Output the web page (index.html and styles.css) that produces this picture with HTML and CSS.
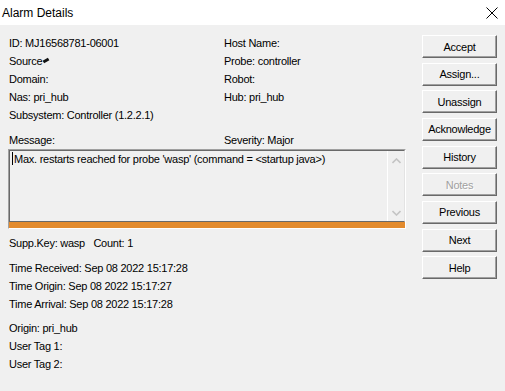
FILE: index.html
```html
<!DOCTYPE html>
<html lang="en">
<head>
	<meta charset="UTF-8">
	<title>Alarm Details</title>
	<link rel="stylesheet" href="styles.css">
</head>
<body>
	<div class="titlebar">
		<span class="title">Alarm Details</span>
		<svg class="close" width="12" height="12" viewBox="0 0 12 12">
			<path d="M0.5 0.5 L11.5 11.5 M11.5 0.5 L0.5 11.5" stroke="#000" stroke-width="1" fill="none"/>
		</svg>
	</div>

	<div class="dialog">
		<div class="details">
			<div class="info">
				<div>ID: MJ16568781-06001</div>
				<div>Host Name:</div>
				<div>Source<span class="smudge"></span></div>
				<div>Probe: controller</div>
				<div>Domain:</div>
				<div>Robot:</div>
				<div>Nas: pri_hub</div>
				<div>Hub: pri_hub</div>
				<div>Subsystem: Controller (1.2.2.1)</div>
				<div></div>
				<div class="gap-top">Message:</div>
				<div class="gap-top">Severity: Major</div>
			</div>

			<div class="msgbox">
				<div class="msgedit">
					<div class="msgtext"><span class="caret"></span>Max. restarts reached for probe 'wasp' (command = &lt;startup java&gt;)</div>
					<div class="scroll">
						<svg width="9" height="6" viewBox="0 0 9 6"><path d="M0.5 5 L4.5 1 L8.5 5" stroke="#c4c4c4" stroke-width="1.6" fill="none"/></svg>
						<svg width="9" height="6" viewBox="0 0 9 6"><path d="M0.5 1 L4.5 5 L8.5 1" stroke="#c4c4c4" stroke-width="1.6" fill="none"/></svg>
					</div>
				</div>
				<div class="severity-bar"></div>
			</div>

			<div class="line supp">Supp.Key: wasp&nbsp;&nbsp;&nbsp;Count: 1</div>

			<div class="group times">
				<div class="line">Time Received: Sep 08 2022 15:17:28</div>
				<div class="line">Time Origin: Sep 08 2022 15:17:27</div>
				<div class="line">Time Arrival: Sep 08 2022 15:17:28</div>
			</div>

			<div class="group origin">
				<div class="line">Origin: pri_hub</div>
				<div class="line">User Tag 1:</div>
				<div class="line">User Tag 2:</div>
			</div>
		</div>

		<div class="buttons">
			<button class="btn">Accept</button>
			<button class="btn">Assign...</button>
			<button class="btn">Unassign</button>
			<button class="btn">Acknowledge</button>
			<button class="btn">History</button>
			<button class="btn" disabled>Notes</button>
			<button class="btn">Previous</button>
			<button class="btn">Next</button>
			<button class="btn">Help</button>
		</div>
	</div>
</body>
</html>
```

FILE: styles.css
```css
html, body { margin: 0; height: 100%; }
body { background: #f0f0f0; font-family: "Liberation Sans", Arial, sans-serif; font-size: 11px; letter-spacing: -0.25px; color: #000; }

.titlebar { height: 25px; background: #fff; display: flex; align-items: center; justify-content: space-between; padding: 0 7px 0 2px; letter-spacing: 0; }
.title { font-size: 12px; }
.close { display: block; }

.dialog { display: flex; }
.details { width: 406px; padding: 9px 0 0 8px; }

.info { display: grid; grid-template-columns: 215px 1fr; grid-auto-rows: 18px; line-height: 18px; padding-left: 1px; }
.info .gap-top { margin-top: 7px; }
.smudge { display: inline-block; width: 6px; height: 3px; background: #111; transform: rotate(-30deg); margin-left: 1px; vertical-align: 3px; }

.msgbox { margin-top: 7px; width: 396px; border: 1px solid; border-color: #a0a0a0 #fff #fff #a0a0a0; }
.msgedit { display: flex; height: 70px; border: 1px solid; border-color: #696969 #e3e3e3 #696969 #696969; }
.msgtext { flex: 1; line-height: 16px; padding-left: 2px; white-space: nowrap; overflow: hidden; }
.caret { display: inline-block; width: 1px; height: 13px; background: #000; vertical-align: -2px; margin-right: 1px; }
.scroll { width: 16px; border-left: 1px solid #fff; display: flex; flex-direction: column; justify-content: space-between; align-items: center; padding: 7px 0 5px; }
.scroll svg { display: block; }
.severity-bar { height: 6px; background: #e38b2e; }

.line { line-height: 18px; padding-left: 1px; }
.supp { margin-top: 5px; }
.group { margin-top: 7px; }
.origin { margin-top: 6px; }

.buttons { display: flex; flex-direction: column; gap: 4.67px; padding-top: 10px; margin-left: 8px; }
.btn { width: 75px; height: 23px; padding: 0; background: #f0f0f0; font-family: inherit; font-size: 11px; letter-spacing: -0.25px; color: #000; border: 1px solid; border-color: #fff #696969 #696969 #fff; box-shadow: inset -1px -1px #a0a0a0; border-radius: 0; }
.btn:disabled { color: #a0a0a0; text-shadow: 1px 1px #fff; }
```
